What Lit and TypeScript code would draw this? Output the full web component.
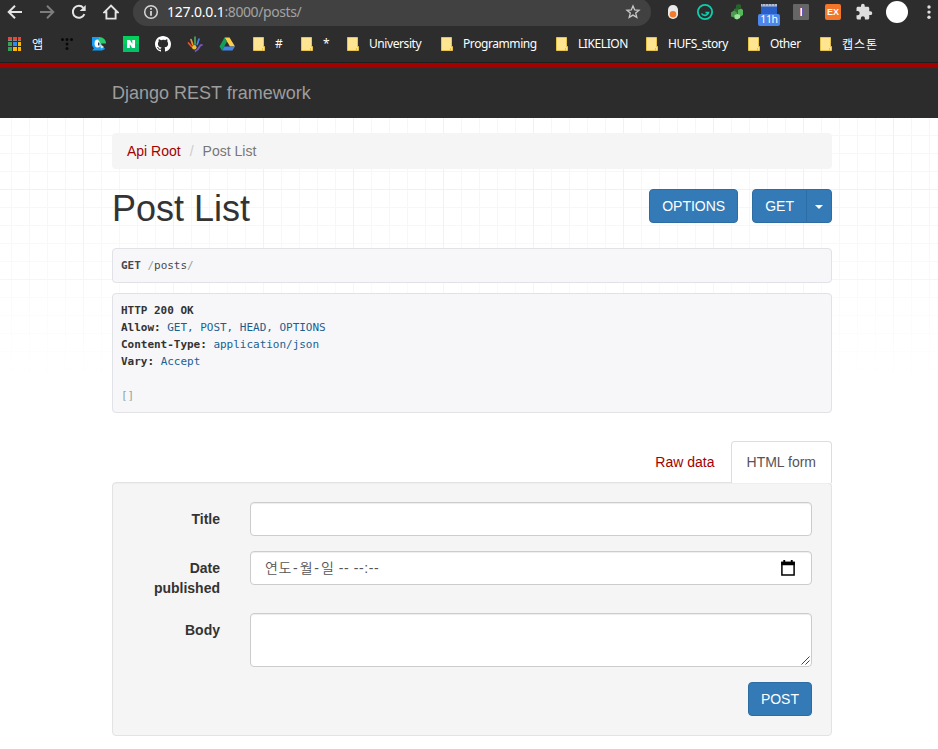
import { LitElement, html, css, svg } from "lit";
import { customElement } from "lit/decorators.js";

const S = (vb: string, w: number, h: number, body: unknown) =>
  html`<svg viewBox=${vb} width=${w} height=${h}>${body}</svg>`;

const icons: Record<string, unknown> = {
  back: S("0 0 16 16", 16, 16, svg`<path d="M15 8H2M8 1.7L1.7 8L8 14.3" fill="none" stroke="#e4e4e4" stroke-width="2"/>`),
  forward: S("0 0 16 16", 16, 16, svg`<path d="M1 8H14M8 1.7L14.3 8L8 14.3" fill="none" stroke="#7d7d7d" stroke-width="2"/>`),
  reload: S("0 0 16 16", 16, 16, svg`<path d="M13.4 10.2A6 6 0 1 1 12.4 3.9" fill="none" stroke="#e4e4e4" stroke-width="2"/><path d="M14.7 1V7H8.7Z" fill="#e4e4e4"/>`),
  home: S("0 0 16 16", 16, 16, svg`<path d="M8 1.6L1.3 8.3H3.4V14.6H12.6V8.3H14.7Z" fill="none" stroke="#e4e4e4" stroke-width="1.9"/>`),
  info: S("0 0 16 16", 16, 16, svg`<circle cx="8" cy="8" r="6.3" fill="none" stroke="#d6d6d6" stroke-width="1.5"/><path d="M8 7v4.8M8 4v1.8" stroke="#d6d6d6" stroke-width="1.8"/>`),
  star: S("0 0 16 16", 16, 16, svg`<path d="M8 2L9.7 6L14 6.3L10.7 9.1L11.8 13.4L8 11.1L4.2 13.4L5.3 9.1L2 6.3L6.3 6Z" fill="none" stroke="#c8c8c8" stroke-width="1.3"/>`),
  capsule: S("0 0 16 16", 16, 16, svg`<rect x="3" y="1" width="10" height="14" rx="4.8" fill="#e9e9e9"/><circle cx="8" cy="10.3" r="3.3" fill="#f47b2b"/>`),
  ring: S("0 0 16 16", 16, 16, svg`<circle cx="8" cy="8" r="7.100" fill="none" stroke="#0ccfae" stroke-width="1.800"/><path d="M4.600 9.500C6 12.300 10.600 12 11.500 8.600H8.500" fill="none" stroke="#0ccfae" stroke-width="1.600"/>`),
  cubes: S("0 0 16 16", 16, 16, svg`<path d="M7 1l3-1 2 1v3l-3 1-2-1z" fill="#28622b"/><path d="M5 5l3-1 4 2v5l-4 1-3-2z" fill="#2d7030"/><path d="M2 8.500l3-2 3 2v4l-3 1-3-1z" fill="#4a9d4c"/><path d="M9 6l3-1.500 2 1.500v5l-3 2-2-1z" fill="#57b759"/><path d="M5.500 11l3-1 2.500 1v3l-3 1.500-2.500-1z" fill="#9be49b"/>`),
  calendarExt: S("0 0 22 14", 22, 14, svg`<path d="M3 1h16v10H3z" fill="#2a5fc9"/><path d="M3 1h16v2.500H3z" fill="#b4bdcc"/><path d="M4.500 1v1.500M7.500 1v1.500M10.500 1v1.500M13.500 1v1.500M16.500 1v1.500" stroke="#7d879c" stroke-width="1"/>`),
  bar: S("0 0 16 16", 16, 16, svg`<rect width="16" height="16" rx="1" fill="#666"/><path d="M7 4h1v8H7z" fill="#efb2b7"/><path d="M8 4h1v8H8z" fill="#fff"/><path d="M9 4h1v8H9z" fill="#6657b7"/>`),
  puzzle: S("0 0 24 24", 18, 18, svg`<path fill="#dedede" d="M20.500 11H19V7c0-1.100-.9-2-2-2h-4V3.500a2.500 2.500 0 0 0-5 0V5H4c-1.100 0-1.990.9-1.990 2v3.800H3.500c1.490 0 2.700 1.210 2.700 2.700s-1.210 2.700-2.700 2.700H2V20c0 1.100.9 2 2 2h3.800v-1.500c0-1.490 1.210-2.700 2.700-2.700s2.700 1.210 2.700 2.700V22H17c1.100 0 2-.9 2-2v-4h1.500a2.500 2.500 0 0 0 0-5z"/>`),
  dots: S("0 0 4 16", 4, 16, svg`<circle cx="2" cy="3" r="1.700" fill="#dedede"/><circle cx="2" cy="8.100" r="1.700" fill="#dedede"/><circle cx="2" cy="13.200" r="1.700" fill="#dedede"/>`),
  apps: S("0 0 16 16", 16, 16, svg`
    <path d="M0 1h4v3H0zM5 1h4v3H5zM10 1h3v3h-3z" fill="#f04337"/><path d="M0 6h4v4H0zM0 11h4v4H0z" fill="#35a258"/>
    <path d="M5 6h4v4H5z" fill="#2d8af0"/><path d="M10 6h3v4h-3zM5 11h4v4H5zM10 11h3v4h-3z" fill="#fbb70a"/><path d="M0 4h4v1H0zM5 4h4v1H5zM10 4h3v1h-3z" fill="#888"/>`),
  tistory: S("0 0 16 16", 16, 16, svg`<g fill="#090909"><circle cx="3.500" cy="3.500" r="1.500"/><circle cx="8" cy="3.500" r="1.500"/><circle cx="12.500" cy="3.500" r="1.500"/><circle cx="8" cy="8" r="1.500"/><circle cx="8" cy="12.500" r="1.500"/></g>`),
  bird: S("0 0 16 16", 16, 16, svg`<path d="M1 1h8v5l5 7-3 1.500H1l2-2-2-3z" fill="#159cf4"/><ellipse cx="6.500" cy="7.500" rx="3" ry="4" fill="#fff"/><path d="M8 1c4.500 0 7 3 7 6.500H10L7.500 4.500z" fill="#2bca6b"/><path d="M7 6.500h1.500v3H7z" fill="#233b55"/><path d="M9 8.500l4 2.500-3 1.500z" fill="#f2e9c0"/>`),
  naver: S("0 0 16 16", 16, 16, svg`<rect width="16" height="16" fill="#04cf5c"/><rect y="8" width="16" height="8" fill="#04c066"/><path d="M4 4h3l2.300 4V4H12v8H9L6.800 8v4H4z" fill="#fff"/>`),
  github: S("0 0 16 16", 16, 16, svg`<path fill="#fff" d="M8 0C3.580 0 0 3.580 0 8c0 3.540 2.290 6.530 5.470 7.590.4.070.55-.17.55-.38 0-.19-.01-.82-.01-1.490-2.010.37-2.530-.49-2.690-.94-.09-.23-.48-.94-.82-1.130-.28-.15-.68-.52-.01-.53.63-.01 1.080.58 1.230.82.72 1.210 1.870.87 2.330.66.070-.52.28-.87.51-1.070-1.780-.2-3.640-.89-3.640-3.950 0-.87.31-1.590.82-2.150-.08-.2-.36-1.020.08-2.120 0 0 .67-.21 2.200.82A7.600 7.600 0 0 1 8 3.860c.68 0 1.360.09 2 .27 1.530-1.040 2.200-.82 2.200-.82.44 1.100.16 1.920.08 2.120.51.56.82 1.270.82 2.150 0 3.070-1.870 3.750-3.650 3.950.29.25.54.73.54 1.480 0 1.070-.01 1.930-.01 2.200 0 .21.15.46.55.38A8.010 8.010 0 0 0 16 8c0-4.420-3.580-8-8-8z"/>`),
  hand: S("0 0 16 16", 16, 16, svg`<g fill="none" stroke-width="1.700" stroke-linecap="round"><path d="M1.500 7l3 3.500" stroke="#ee5035"/><path d="M4 3.500L5.700 8.500" stroke="#f6912a"/><path d="M8 1v7" stroke="#43a85a"/><path d="M12 3L10.200 8.500" stroke="#4185ee"/><path d="M15 9c-3-.5-2 4-6.500 6" stroke="#7d58c7"/></g><circle cx="7.300" cy="11.200" r="2.200" fill="#f6bd26"/>`),
  drive: S("0 0 16 16", 16, 16, svg`<path d="M5.500 1.500h5L16 10.500h-5z" fill="#ffcf48"/><path d="M5.500 1.500L8 5.600 3 14.500 .5 10.500z" fill="#159e58"/><path d="M5.300 10.500H16l-2.600 4H3z" fill="#4285e8"/>`),
  folder: S("0 0 16 16", 16, 16, svg`<path d="M2.500 1.500H12.500V10.500H13.500V14.500H2.500Z" fill="#ffe591" stroke="#e8c34b"/><path d="M11.500 12v2" stroke="#e8c34b"/>`),
  date: S("0 0 16 16", 16, 16, svg`<path d="M1.900 2.500H14.100V15H1.900z" fill="none" stroke="#000" stroke-width="1.500"/><path d="M1.200 1.700h13.600V5.200H1.200zM3.300 0h1.900v2H3.300zM10.800 0h1.900v2h-1.900z" fill="#000"/>`),
  grip: S("0 0 9 9", 9, 9, svg`<path d="M.5 8.500l8-8M4.500 8.500l4-4" stroke="#444" stroke-width="1" fill="none"/>`),
};

interface Mark { icon: string; text?: string; w: number; cls?: string }
const marks: Mark[] = [
  { icon: "apps", text: "앱", w: 51, cls: "ko" },
  { icon: "tistory", w: 32 },
  { icon: "bird", w: 32 },
  { icon: "naver", w: 32 },
  { icon: "github", w: 32 },
  { icon: "hand", w: 32 },
  { icon: "drive", w: 32 },
  { icon: "folder", text: "#", w: 48 },
  { icon: "folder", text: "*", w: 46 },
  { icon: "folder", text: "University", w: 94 },
  { icon: "folder", text: "Programming", w: 115 },
  { icon: "folder", text: "LIKELION", w: 90 },
  { icon: "folder", text: "HUFS_story", w: 102 },
  { icon: "folder", text: "Other", w: 72 },
  { icon: "folder", text: "캡스톤", w: 70, cls: "ko" },
];

@customElement("browser-chrome")
class BrowserChrome extends LitElement {
  static styles = css`
    :host { display: block; box-sizing: border-box; background: #2d2d2d; height: 63px; border-bottom: 1px solid #1e2020; overflow: hidden; font-family: "Noto Sans", "Noto Sans CJK KR", sans-serif; color: #fff; }
    svg { display: block; flex: none; }
    .bar { display: flex; align-items: center; height: 28px; margin-top: -2px; }
    .nav { display: flex; gap: 16px; padding-left: 7px; width: 126px; flex: none; }
    .url { display: flex; align-items: center; width: 518px; height: 28px; border-radius: 14px; background: #414141; box-sizing: border-box; padding: 0 10px; flex: none; }
    .addr { flex: 1; margin-left: 8px; font-size: 14px; line-height: 20px; color: #fff; white-space: nowrap; letter-spacing: -0.2px; }
    .addr span { color: #a3a3a3; letter-spacing: -0.42px; }
    .ext { display: flex; align-items: center; margin-left: 14px; gap: 16px; }
    .cal { position: relative; width: 16px; height: 16px; }
    .cal svg { position: absolute; left: -3px; top: -1px; }
    .badge { position: absolute; left: -3px; top: 10px; width: 22px; height: 12px; border-radius: 2px; background: #4b87ec; font-size: 10.5px; line-height: 11px; text-align: center; letter-spacing: -0.3px; }
    .ex { width: 16px; height: 16px; border-radius: 2px; background: #f4762a; font: bold 9px/16px "Liberation Sans", sans-serif; text-align: center; }
    .avatar { width: 22px; height: 22px; border-radius: 50%; background: #fff; margin-left: -3px; }
    .puzzle { margin-left: -2px; }
    .more { margin-left: 3px; }
    .marks { display: flex; align-items: center; height: 36px; padding-left: 8px; font-size: 12px; }
    .mark { display: flex; align-items: center; gap: 8px; flex: none; white-space: nowrap; line-height: 16px; letter-spacing: -0.42px; }
    .ko { font-family: "Noto Sans CJK KR", sans-serif; letter-spacing: 0.9px; }
  `;
  render() {
    return html`
      <div class="bar">
        <div class="nav">${icons.back}${icons.forward}${icons.reload}${icons.home}</div>
        <div class="url">${icons.info}<div class="addr">127.0.0.1<span>:8000/posts/</span></div>${icons.star}</div>
        <div class="ext">
          ${icons.capsule}${icons.ring}${icons.cubes}
          <div class="cal">${icons.calendarExt}<div class="badge">11h</div></div>
          ${icons.bar}
          <div class="ex">EX</div>
          <div class="puzzle">${icons.puzzle}</div>
          <div class="avatar"></div>
          <div class="more">${icons.dots}</div>
        </div>
      </div>
      <div class="marks">
        ${marks.map((m) => html`<div class="mark ${m.cls ?? ""}" style="width:${m.w}px">${icons[m.icon]}${m.text ? html`<span>${m.text}</span>` : ""}</div>`)}
      </div>`;
  }
}

@customElement("app-root")
class AppRoot extends LitElement {
  static styles = css`
    :host { display: block; height: 749px; overflow: hidden; background: #fff; color: #333; font: 14px/20px "Liberation Sans", Arial, sans-serif; }
    * { box-sizing: border-box; }
    svg { display: block; }
    .navbar { height: 55px; border-top: 5px solid #a30000; background: #2c2c2c; padding: 15px 112px; font-size: 18px; line-height: 20px; color: #9d9d9d; }
    .page { height: 631px; padding: 15px 106px 0 112px;
      background:
        linear-gradient(rgba(255,255,255,0) 0, rgba(255,255,255,0) 110px, #fff 265px),
        linear-gradient(90deg, #f1f1f1 1px, transparent 1px) 83px 0 / 90px 90px,
        linear-gradient(#f1f1f1 1px, transparent 1px) 0 71px / 90px 90px,
        linear-gradient(90deg, #f7f7f7 1px, transparent 1px) 11px 0 / 18px 18px,
        linear-gradient(#f7f7f7 1px, transparent 1px) 0 17px / 18px 18px, #fff; }
    .crumbs { display: flex; height: 36px; padding: 8px 15px; border-radius: 4px; background: #f5f5f5; color: #777; }
    .link { color: #a30000; }
    .sep { color: #ccc; padding: 0 9px; }
    .head { display: flex; justify-content: space-between; margin-top: 20px; height: 59px; }
    h1 { margin: 0; font-size: 36px; line-height: 39px; font-weight: 400; }
    .actions { display: flex; gap: 14px; }
    .btn { height: 34px; padding: 6px 12px; border: 1px solid #2e6da4; border-radius: 4px; background: #337ab7; color: #fff; font: inherit; text-align: center; }
    .group { display: flex; }
    .get { border-radius: 4px 0 0 4px; }
    .drop { display: flex; align-items: center; margin-left: -1px; padding: 0 8px; border-radius: 0 4px 4px 0; }
    .caret { border: 4px solid transparent; border-top-color: #fff; border-bottom: 0; width: 0; height: 0; margin-top: 2px; }
    pre { margin: 0 0 10px; padding: 8px; border: 1px solid #e1e1e8; border-radius: 4px; background: #f7f7f9; font: 11px/17.1px "DejaVu Sans Mono", monospace; color: #48484c; letter-spacing: -0.022px; }
    .req { height: 35px; }
    .res { height: 120px; }
    .b { font-weight: bold; }
    .k { color: #333; font-weight: bold; }
    .v { color: #195f91; }
    .p { color: #93a1a1; }
    .tabs { display: flex; justify-content: flex-end; margin-top: 28px; height: 42px; }
    .tab { padding: 11px 16px; }
    .on { padding: 10px 15px; border: 1px solid #ddd; border-bottom: 0; border-radius: 4px 4px 0 0; background: #fff; color: #555; z-index: 1; }
    .well { height: 254px; margin-top: -1px; padding: 19px; border: 1px solid #e3e3e3; border-radius: 4px; background: #f5f5f5; box-shadow: inset 0 1px 1px rgba(0,0,0,.03); }
    .row { display: flex; align-items: flex-start; margin-bottom: 15px; }
    .label { width: 88px; padding-top: 7px; text-align: right; font-weight: bold; }
    .field { display: flex; justify-content: space-between; align-items: center; width: 562px; margin-left: auto; height: 34px; padding: 0 15px 0 14px; border: 1px solid #ccc; border-radius: 4px; background: #fff; box-shadow: inset 0 1px 1px rgba(0,0,0,.075); color: #555; }
    .area { height: 54px; align-items: flex-end; padding: 0 1px 1px 0; justify-content: flex-end; }
    .last { display: flex; justify-content: flex-end; }
    .ko { font-family: "Liberation Sans", "Noto Sans CJK KR", sans-serif; letter-spacing: 0.6px; white-space: pre; }
    .ko i { font-style: normal; padding: 0 1.3px; }
    .ko b { font-weight: 350; letter-spacing: 0.5px; }
  `;
  render() {
    return html`
      <browser-chrome></browser-chrome>
      <div class="navbar">Django REST framework</div>
      <div class="page">
        <div class="crumbs"><span class="link">Api Root</span><span class="sep">/</span><span>Post List</span></div>
        <div class="head">
          <h1>Post List</h1>
          <div class="actions">
            <button class="btn">OPTIONS</button>
            <div class="group"><button class="btn get">GET</button><button class="btn drop"><span class="caret"></span></button></div>
          </div>
        </div>
        <pre class="req"><span class="b">GET</span> <span class="p">/</span>posts<span class="p">/</span></pre>
        <pre class="res"><span class="k">HTTP 200 OK</span>
<span class="k">Allow:</span> <span class="v">GET, POST, HEAD, OPTIONS</span>
<span class="k">Content-Type:</span> <span class="v">application/json</span>
<span class="k">Vary:</span> <span class="v">Accept</span>

<span class="p">[]</span></pre>
        <div class="tabs"><div class="tab link">Raw data</div><div class="tab on">HTML form</div></div>
        <div class="well">
          <div class="row"><div class="label">Title</div><div class="field"></div></div>
          <div class="row"><div class="label">Date published</div><div class="field"><span class="ko"><b>연도</b><i>-</i><b>월</b><i>-</i><b>일</b> -- --:--</span>${icons.date}</div></div>
          <div class="row"><div class="label">Body</div><div class="field area">${icons.grip}</div></div>
          <div class="last"><button class="btn">POST</button></div>
        </div>
      </div>`;
  }
}
